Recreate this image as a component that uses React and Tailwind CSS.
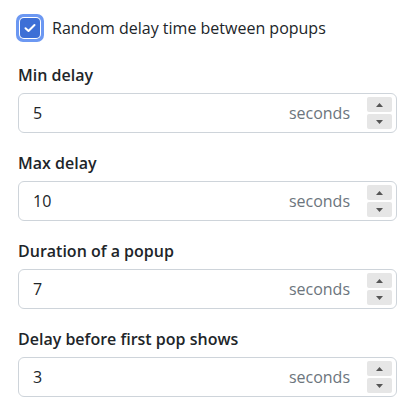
import React from 'react';

const fields = [
  { label: 'Min delay', value: '5' },
  { label: 'Max delay', value: '10' },
  { label: 'Duration of a popup', value: '7' },
  { label: 'Delay before first pop shows', value: '3' },
];

const Spinner = () => (
  <div className="flex flex-col gap-[2px]">
    <div className="w-[25px] h-[15px] bg-[#e6e6e6] rounded-[2px] flex items-center justify-center">
      <svg width="7" height="4" viewBox="0 0 7 4"><path d="M0 4 L3.5 0 L7 4 Z" fill="#555" /></svg>
    </div>
    <div className="w-[25px] h-[15px] bg-[#e6e6e6] rounded-[2px] flex items-center justify-center">
      <svg width="7" height="4" viewBox="0 0 7 4"><path d="M0 0 L3.5 4 L7 0 Z" fill="#555" /></svg>
    </div>
  </div>
);

const App = () => {
  return (
    <div className="w-[415px] h-[414px] bg-white px-[18px] pt-[14px] text-[#212529]" style={{ fontFamily: '"Open Sans", "Noto Sans", sans-serif' }}>
      <div className="flex items-center gap-[8px] -ml-[2px]">
        <div className="w-[28px] h-[28px] rounded-[7px] bg-[#6c98f2] p-[3px]">
          <div className="w-full h-full rounded-[5px] bg-white p-[1px]">
            <div className="w-full h-full rounded-[4px] bg-[#3d6fd6] flex items-center justify-center">
              <svg width="12" height="10" viewBox="0 0 12 10">
                <path d="M1.5 5.2 L4.5 8 L10.5 2" stroke="white" strokeWidth="2" fill="none" strokeLinecap="round" strokeLinejoin="round" />
              </svg>
            </div>
          </div>
        </div>
        <span className="text-[16px]">Random delay time between popups</span>
      </div>

      <div className="mt-[21px] flex flex-col gap-[18px]">
        {fields.map((f) => (
          <div key={f.label}>
            <div className="text-[16px] font-semibold leading-[24px] mb-[6px]">{f.label}</div>
            <div className="h-[40px] border border-[#ced4da] rounded-[6px] flex items-center pl-[14px] pr-[4px]">
              <span className="text-[16px] flex-1">{f.value}</span>
              <span className="text-[16px] text-[#6c757d] mr-[17px]">seconds</span>
              <Spinner />
            </div>
          </div>
        ))}
      </div>
    </div>
  );
};

export default App;
